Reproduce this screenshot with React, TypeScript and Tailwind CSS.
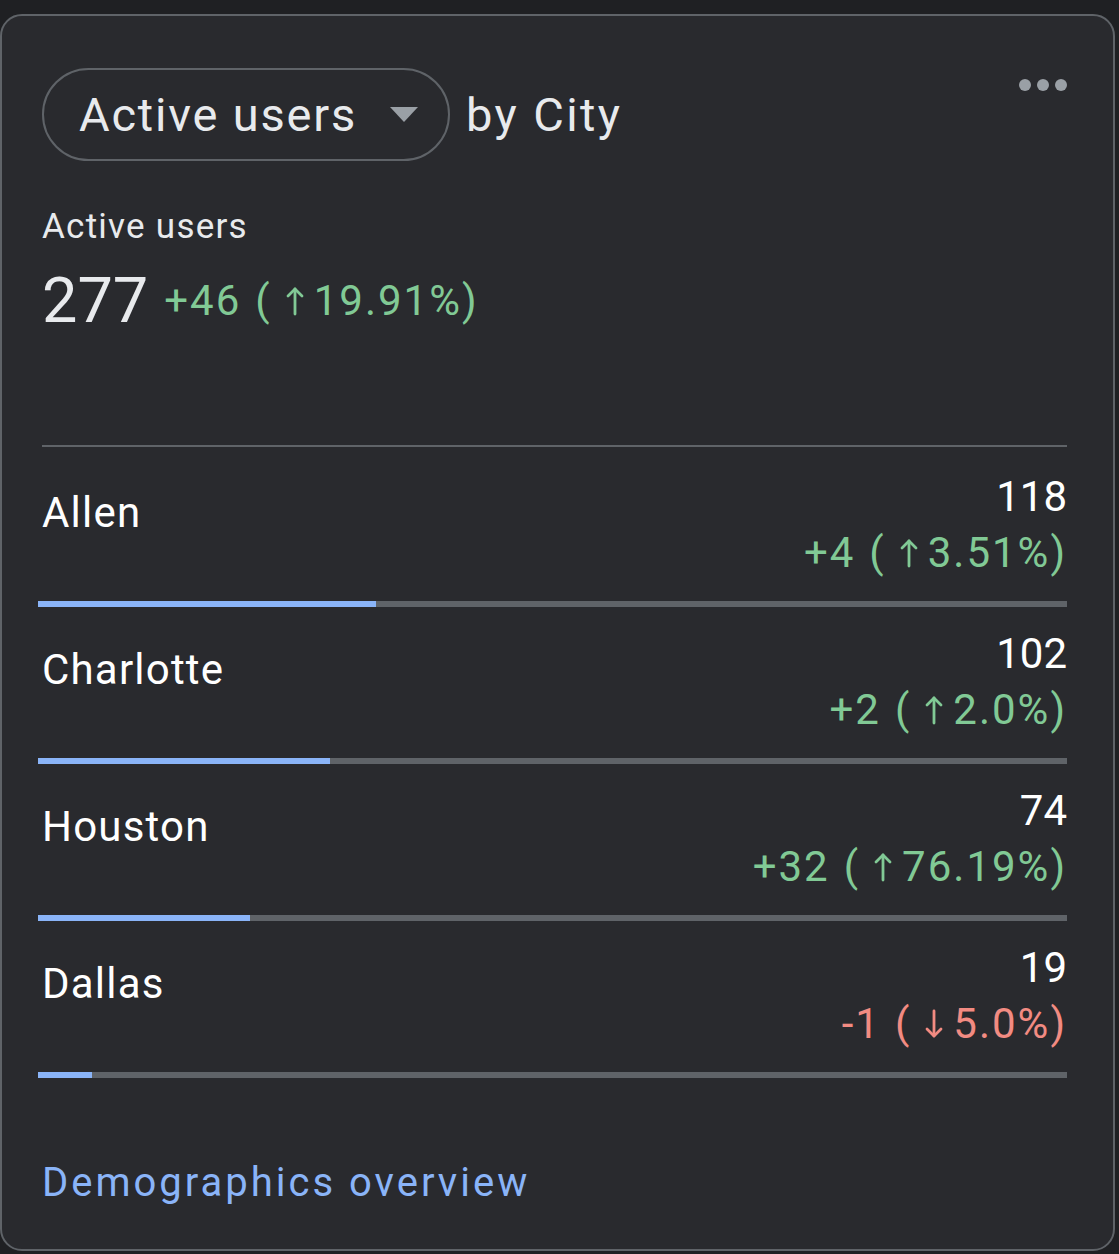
const cities = [
  { name: 'Allen', value: 118, delta: '+4', pct: '3.51%', up: true },
  { name: 'Charlotte', value: 102, delta: '+2', pct: '2.0%', up: true },
  { name: 'Houston', value: 74, delta: '+32', pct: '76.19%', up: true },
  { name: 'Dallas', value: 19, delta: '-1', pct: '5.0%', up: false },
];

const SCALE = 359;

function Arrow({ up }: { up: boolean }) {
  return (
    <svg viewBox="0 0 18 30" className="inline-block w-[18px] h-[30px] ml-[14px] mr-[10px]" fill="none" stroke="currentColor" strokeWidth="2.8" strokeLinecap="round" strokeLinejoin="round">
      {up ? (
        <>
          <path d="M9 28V3" />
          <path d="M2 10l7-7 7 7" />
        </>
      ) : (
        <>
          <path d="M9 2v25" />
          <path d="M2 20l7 7 7-7" />
        </>
      )}
    </svg>
  );
}

function Change({ delta, pct, up }: { delta: string; pct: string; up: boolean }) {
  return (
    <span className={`inline-flex items-center tracking-[2px] ${up ? 'text-[#81c995]' : 'text-[#f28b82]'}`}>
      <span>{delta}</span>
      <span className="ml-[14px]">(</span>
      <Arrow up={up} />
      <span>{pct})</span>
    </span>
  );
}

export default function App() {
  return (
    <div className="min-h-[1254px] bg-[#1f2023] pt-[14px] font-['Roboto',sans-serif]">
      <div className="w-[1115px] h-[1237px] bg-[#292a2e] border-2 border-[#5f6368] rounded-[22px] pt-[52px] pl-[40px] pr-[46px] flex flex-col">
        {/* Header */}
        <div className="flex items-start justify-between">
          <div className="flex items-center">
            <button className="h-[93px] w-[408px] rounded-full border-2 border-[#5f6368] flex items-center pl-[35px] pr-[30px] text-[#e8eaed] text-[47px] leading-[56px] tracking-[1.8px]">
              <span>Active users</span>
              <svg viewBox="0 0 28 15" className="w-[28px] h-[15px] ml-auto" fill="#9aa0a6">
                <path d="M0 0h28L14 15z" />
              </svg>
            </button>
            <span className="ml-[16px] text-[#e8eaed] text-[47px] leading-[56px] tracking-[2.4px]">by City</span>
          </div>
          <div className="flex gap-[6px] mt-[11px]">
            <span className="w-[12px] h-[12px] rounded-full bg-[#9aa0a6]" />
            <span className="w-[12px] h-[12px] rounded-full bg-[#9aa0a6]" />
            <span className="w-[12px] h-[12px] rounded-full bg-[#9aa0a6]" />
          </div>
        </div>

        {/* Summary */}
        <div className="mt-[46px] text-[#e8eaed] text-[35px] leading-[40px] tracking-[1.25px]">Active users</div>
        <div className="mt-[22px] flex items-end gap-[16px]">
          <span className="text-[#e8eaed] text-[63px] leading-[64px]">277</span>
          <span className="text-[42px] leading-[64px]">
            <Change delta="+46" pct="19.91%" up />
          </span>
        </div>

        <div className="mt-[112px] h-[2px] bg-[#5f6368] mb-[3px]" />

        {/* Rows */}
        {cities.map((c) => (
          <div key={c.name}>
            <div className="pt-[19px] pb-[20px] flex items-start justify-between">
              <span className="pt-[16px] text-white text-[42px] leading-[56px] tracking-[1.2px]">{c.name}</span>
              <div className="flex flex-col items-end text-[42px] leading-[56px]">
                <span className="text-white">{c.value}</span>
                <Change delta={c.delta} pct={c.pct} up={c.up} />
              </div>
            </div>
            <div className="ml-[-4px] h-[6px] bg-[#5f6368] flex">
              <div className="h-full bg-[#8ab4f8]" style={{ width: `${(c.value / SCALE) * 100}%` }} />
            </div>
          </div>
        ))}

        <a href="#" className="mt-[81px] text-[#8ab4f8] text-[40px] leading-[48px] tracking-[3px] self-start">
          Demographics overview
        </a>
      </div>
    </div>
  );
}
